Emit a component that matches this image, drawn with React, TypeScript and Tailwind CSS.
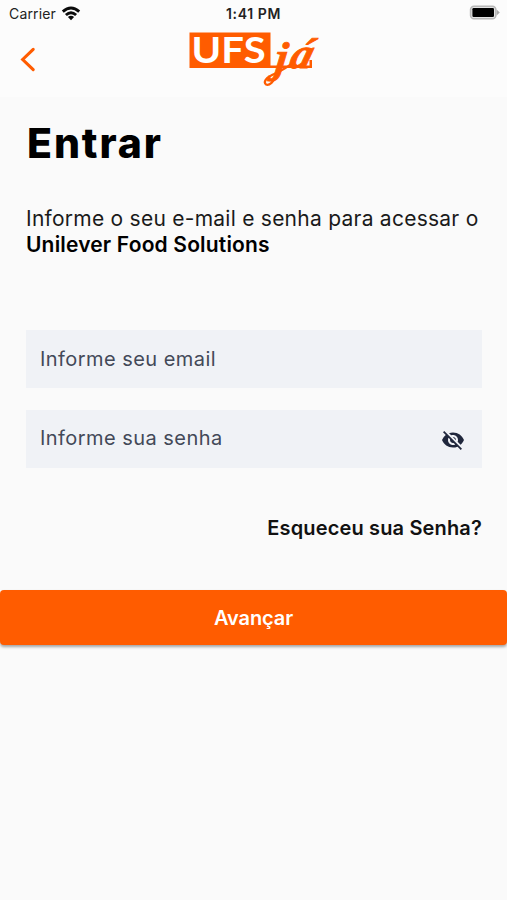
import React from 'react';
import { MdVisibilityOff } from 'react-icons/md';

function WifiIcon() {
  return (
    <svg width="20" height="15" viewBox="0 0 20 15" aria-hidden>
      <g fill="none" stroke="#0b0b0b" strokeWidth="2.9">
        <path d="M1.8 5.6 Q10 -1.6 18.2 5.6" />
        <path d="M4.9 9 Q10 4.4 15.1 9" />
      </g>
      <path d="M10 14.2 L6.9 11.1 Q10 8.5 13.1 11.1 Z" fill="#0b0b0b" />
    </svg>
  );
}

function BatteryIcon() {
  return (
    <svg width="32" height="16" viewBox="0 0 32 16" aria-hidden>
      <rect x="1.6" y="1.2" width="25.2" height="12.6" rx="3.4" fill="#e4e4e4" stroke="#b8b8b8" strokeWidth="1.6" />
      <rect x="3.4" y="3" width="21.6" height="9" rx="1.2" fill="#000" />
      <path d="M27.6 4.6 L30.8 7.5 L27.6 10.4 Z" fill="#a8a8a8" />
    </svg>
  );
}

function StatusBar() {
  return (
    <div className="grid h-[28px] grid-cols-3 items-center pb-[2px] text-[14px] text-[#222]">
      <div className="flex items-center gap-[5px] pl-[9px]">
        <span className="tracking-[0.15px]">Carrier</span>
        <WifiIcon />
      </div>
      <span className="text-center text-[14px] font-semibold tracking-[0.6px]">1:41 PM</span>
      <div className="flex justify-end pr-[6px]">
        <BatteryIcon />
      </div>
    </div>
  );
}

function Logo() {
  return (
    <svg width="134" height="66" viewBox="0 0 134 66" className="overflow-visible" role="img" aria-label="UFS já">
      <path d="M2.5 4.5 H83.5 V37.5 H122.5 V32 H125 V40 H2.5 Z" fill="#ff5c00" />
      <text
        x="4.6"
        y="35.4"
        fill="#fff"
        fontSize="36.5"
        fontWeight="700"
        fontFamily="Lato, sans-serif"
        textLength="74"
        lengthAdjust="spacingAndGlyphs"
      >
        UFS
      </text>
      <g
        fill="#ff5c00"
        stroke="#ff5c00"
        strokeWidth="0.9"
        fontWeight="700"
        fontStyle="italic"
        fontFamily="'Liberation Serif', serif"
      >
        <text transform="translate(87 44) skewX(-7)" fontSize="43">
          j
        </text>
        <text transform="translate(101 39.5) skewX(-16)" fontSize="43">
          á
        </text>
      </g>
      {/* flourish that ties the tail of the j to the next letter */}
      <path
        d="M90 46 C87 54 82 58 79 56.5 C76 54 79 50 85 47 C92 43.5 99 41 105 35"
        fill="none"
        stroke="#ff5c00"
        strokeWidth="2.2"
        strokeLinecap="round"
      />
    </svg>
  );
}

function Header() {
  return (
    <header className="grid h-[69px] grid-cols-[1fr_auto_1fr] items-start">
      <button type="button" aria-label="Voltar" className="ml-[19px] mt-[18px] w-fit">
        <svg width="18" height="27" viewBox="0 0 18 27" aria-hidden>
          <path d="M14.2 3.4 L3.7 13.5 L14.2 23.6" fill="none" stroke="#ff5c00" strokeWidth="3.1" strokeLinecap="round" />
        </svg>
      </button>
      <Logo />
      <span />
    </header>
  );
}

function Field({ label, children }: { label: string; children?: React.ReactNode }) {
  return (
    <div className="flex h-[58px] items-center justify-between bg-[#f0f2f6] pl-[14px] pr-[17px]">
      <span className="text-[20px] tracking-[0.45px] text-[#434958] not-last:pb-[3px]">{label}</span>
      {children}
    </div>
  );
}

export default function App() {
  return (
    <div className="min-h-[900px] w-[507px] bg-[#fafafa] font-['Inter',sans-serif] text-black">
      <div className="bg-[#fcfcfc]">
        <StatusBar />
        <Header />
      </div>

      <main>
        <div className="px-[26px] pt-[21px]">
          <h1 className="pl-px text-[41px] font-extrabold leading-[50px] tracking-[1.9px]">Entrar</h1>
          <p className="mt-[38px] whitespace-nowrap text-[21px] leading-[26px] tracking-[0.25px] text-[#1a1a1a]">
            Informe o seu e-mail e senha para acessar o
            <br />
            <strong className="font-semibold tracking-[0.17px] text-black">Unilever Food Solutions</strong>
          </p>
        </div>

        <form className="mt-[72px] flex flex-col gap-[22px] pl-[26px] pr-[25px]">
          <Field label="Informe seu email" />
          <Field label="Informe sua senha">
            <MdVisibilityOff className="mt-px size-[24px] text-[#20273c]" />
          </Field>
        </form>

        <div className="mt-[46px] flex justify-end pr-[25px]">
          <a className="text-[20px] font-semibold leading-[28px] tracking-[0.15px] text-[#111]">Esqueceu sua Senha?</a>
        </div>

        <button
          type="button"
          className="mt-[48px] flex h-[55px] w-full items-center justify-center rounded-[4px] bg-[#ff5c00] text-[20px] font-semibold tracking-[-0.1px] text-white shadow-[0_2px_3px_rgba(0,0,0,0.35)]"
        >
          Avançar
        </button>
      </main>
    </div>
  );
}
